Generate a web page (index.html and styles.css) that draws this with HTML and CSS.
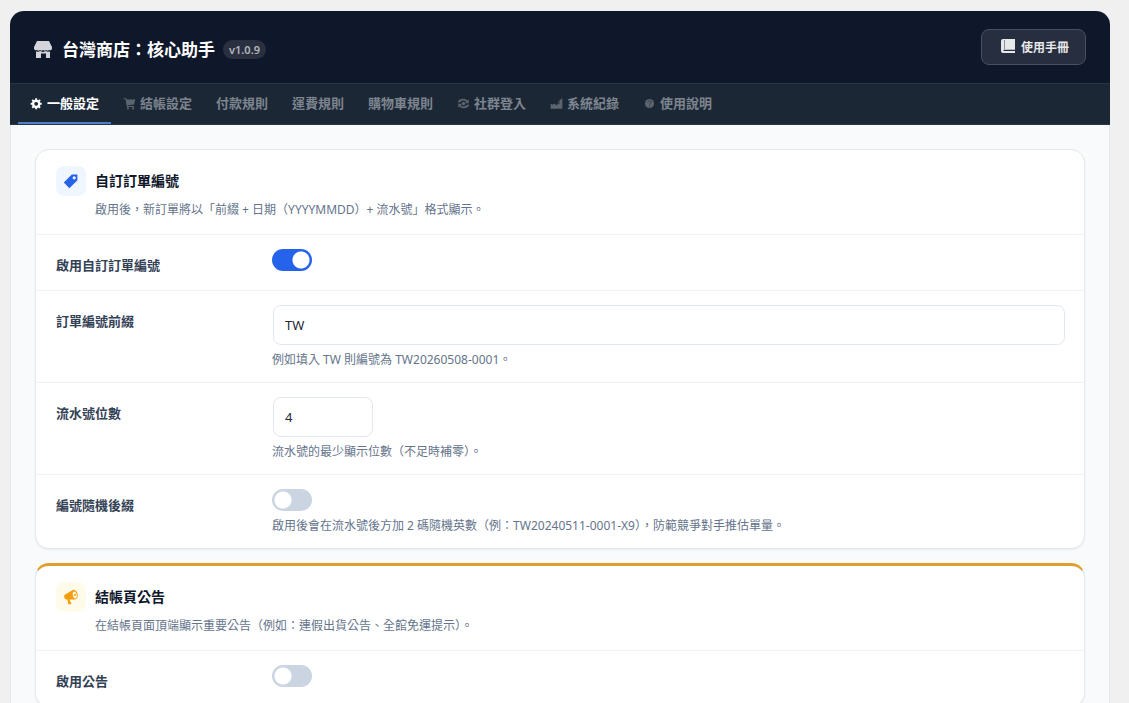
FILE: index.html
```
<!DOCTYPE html>
<html lang="zh-Hant">
<head>
	<meta charset="utf-8">
	<meta name="viewport" content="width=device-width, initial-scale=1">
	<title>台灣商店：核心助手</title>
	<link rel="stylesheet" href="styles.css">
</head>
<body>
	<div class="app">
		<header class="app-header">
			<div class="brand">
				<svg class="brand-icon" viewBox="0 0 20 20"><path d="M4 1h12l3 6v1.700a2 2 0 0 1-3 1.300 2.200 2.200 0 0 1-3 0 2.200 2.200 0 0 1-3 0 2.200 2.200 0 0 1-3 0 2.200 2.200 0 0 1-3 0 2 2 0 0 1-3-1.300V7z"/><path d="M3 11.500l2.500.2 1.500-.6 3 .8 3-.8 1.500.6 2.500-.2V18h-4v-4.500H8V18H3z"/></svg>
				<h1 class="brand-title">台灣商店：核心助手</h1>
				<span class="version">v1.0.9</span>
			</div>
			<button type="button" class="manual-btn">
				<svg class="manual-icon" viewBox="0 0 16 16"><path d="M3 1h12v10.800H3.500v1.200H15v2H3a2 2 0 0 1-2-2V3a2 2 0 0 1 2-2z"/><path class="spine" d="M4.500 2v9"/></svg>
				使用手冊
			</button>
		</header>

		<nav class="tabs">
			<a href="#general" class="tab active">
				<svg class="tab-icon" viewBox="0 0 20 20"><path fill-rule="evenodd" d="M18 12h-2.180c-.17.700-.440 1.350-.810 1.930l1.540 1.540-2.100 2.100-1.540-1.540c-.580.360-1.230.630-1.910.790V19H8v-2.180c-.680-.160-1.330-.430-1.910-.790l-1.540 1.540-2.120-2.120 1.540-1.540c-.360-.580-.630-1.230-.790-1.910H1V9.030h2.170c.160-.700.440-1.350.800-1.940L2.430 5.550l2.100-2.100 1.540 1.540c.580-.370 1.240-.640 1.930-.810V2h3v2.180c.680.160 1.330.430 1.910.790l1.540-1.540 2.120 2.120-1.540 1.540c.360.590.640 1.240.800 1.940H18V12zm-8.500 1.500a3 3 0 1 0 0-6 3 3 0 0 0 0 6z"/></svg>
				一般設定
			</a>
			<a href="#checkout" class="tab">
				<svg class="tab-icon" viewBox="0 0 20 20"><path d="M1 2h4l.8 2H19l-2 7.500-9.800 1 .3 1.500H17v1.500H6L3.800 3.500H1z"/><circle cx="7.500" cy="17.500" r="1.600"/><circle cx="15.500" cy="17.500" r="1.600"/></svg>
				結帳設定
			</a>
			<a href="#payment" class="tab">付款規則</a>
			<a href="#shipping" class="tab">運費規則</a>
			<a href="#cart" class="tab">購物車規則</a>
			<a href="#social" class="tab">
				<svg class="tab-icon" viewBox="0 0 20 20"><circle cx="10" cy="10" r="2.600"/><path d="M1 8c2-6 11-7 15-2.500L18 4v5.500h-5.500l1.800-2C11 4.500 7 5 5 8zM19 12c-2 6-11 7-15 2.500L2 16v-5.500h5.500l-1.800 2C9 15.500 13 15 15 12z"/></svg>
				社群登入
			</a>
			<a href="#logs" class="tab">
				<svg class="tab-icon" viewBox="0 0 20 20"><path d="M1 18v-8l3 2 3-2 3 3 3-3V6l6-4v16z"/><path class="cut" d="M14 4v7"/></svg>
				系統紀錄
			</a>
			<a href="#help" class="tab">
				<svg class="tab-icon" viewBox="0 0 20 20"><circle cx="10" cy="10" r="7"/><path class="cut" d="M7.500 8c0-3.500 5.500-3 5 0-.3 1.500-2.500 1.500-2.500 3.500M10 13v2"/></svg>
				使用說明
			</a>
		</nav>

		<main class="content">
			<section class="card">
				<div class="card-header">
					<span class="card-icon blue">
						<svg viewBox="0 0 20 20"><path fill-rule="evenodd" d="M11 2h7v7L8 19l-7-7zm3 6a2 2 0 1 0 0-4 2 2 0 0 0 0 4z"/></svg>
					</span>
					<h2 class="card-title">自訂訂單編號</h2>
					<p class="card-desc">啟用後，新訂單將以「前綴 + 日期（YYYYMMDD）+ 流水號」格式顯示。</p>
				</div>
				<div class="row">
					<label class="row-label" for="enable_number">啟用自訂訂單編號</label>
					<div class="field">
						<input type="checkbox" class="toggle" id="enable_number" checked>
					</div>
				</div>
				<div class="row">
					<label class="row-label" for="prefix">訂單編號前綴</label>
					<div class="field">
						<input type="text" class="text-input" id="prefix" value="TW">
						<p class="help">例如填入 TW 則編號為 TW20260508-0001。</p>
					</div>
				</div>
				<div class="row">
					<label class="row-label" for="digits">流水號位數</label>
					<div class="field">
						<input type="number" class="text-input small" id="digits" value="4">
						<p class="help">流水號的最少顯示位數（不足時補零）。</p>
					</div>
				</div>
				<div class="row">
					<label class="row-label" for="suffix">編號隨機後綴</label>
					<div class="field">
						<input type="checkbox" class="toggle" id="suffix">
						<p class="help">啟用後會在流水號後方加 2 碼隨機英數（例：TW20240511-0001-X9），防範競爭對手推估單量。</p>
					</div>
				</div>
			</section>

			<section class="card notice">
				<div class="card-header">
					<span class="card-icon amber">
						<svg viewBox="0 0 20 20"><path fill-rule="evenodd" d="M18.150 5.940c.460 1.620.380 3.220-.020 4.480-.420 1.280-1.260 2.180-2.300 2.480-.160.060-.260.060-.400.060-.060.020-.120.020-.180.020-.060.020-.140.020-.220.020h-6.800l2.220 5.500c.020.140-.060.260-.140.340-.080.100-.240.160-.340.160H6.950c-.100 0-.260-.060-.340-.160-.080-.080-.160-.200-.140-.340l-1-5.500H4.250l-.020-.020c-.500.060-1.080-.180-1.540-.620s-.880-1.080-1.060-1.880c-.240-.800-.200-1.560-.020-2.200.180-.620.580-1.080 1.060-1.300l.020-.020 9-5.400c.100-.060.180-.100.240-.160.060-.040.140-.080.240-.120.160-.080.280-.120.500-.180 1.040-.300 2.240.100 3.220.980s1.840 2.240 2.260 3.860zm-2.580 5.980c.640-.180 1.140-.680 1.460-1.500.300-.820.360-2.400.040-3.760-.280-1.080-.780-1.980-1.400-2.620s-1.300-.960-1.940-.800c-.640.180-1.140.780-1.440 1.680-.300.920-.300 2.060 0 3.300.320 1.180.820 2.180 1.440 2.840.620.660 1.220 1.020 1.840.860zm-.4-3.100c-.7.100-1.300-.5-1.300-1.300s.3-1.600 1-1.600 1.300.500 1.300 1.300-.4 1.500-1 1.600z"/></svg>
					</span>
					<h2 class="card-title">結帳頁公告</h2>
					<p class="card-desc">在結帳頁面頂端顯示重要公告（例如：連假出貨公告、全館免運提示）。</p>
				</div>
				<div class="row">
					<label class="row-label" for="enable_notice">啟用公告</label>
					<div class="field">
						<input type="checkbox" class="toggle" id="enable_notice">
					</div>
				</div>
			</section>
		</main>
	</div>
</body>
</html>
```
FILE: styles.css
```
* {
	box-sizing: border-box;
}
html {
	overflow: hidden;
}
body {
	margin: 0;
	padding: 11px 19px 0 10px;
	background: #f0f0f1;
	color: #0f172a;
	font-family: "Noto Sans", "Noto Sans CJK TC", sans-serif;
	font-size: 13px;
	line-height: 20px;
}
h1, h2, p {
	margin: 0;
}
svg {
	flex-shrink: 0;
	fill: currentColor;
}

/* header */
.app-header {
	display: flex;
	align-items: center;
	justify-content: space-between;
	padding: 18px 24px 18px 23px;
	border-radius: 14px 14px 0 0;
	background: #0f172a;
	color: #fff;
}
.brand {
	display: flex;
	align-items: center;
	padding-top: 5px;
}
.brand-icon {
	width: 20px;
	height: 20px;
	margin-right: 9px;
	color: #d3d5da;
}
.brand-title {
	font-size: 17px;
	line-height: 24px;
}
.version {
	margin-left: 8px;
	padding: 0 6px;
	border-radius: 10px;
	background: #2a3040;
	color: #b3b6bd;
	font-size: 11px;
	font-weight: 600;
	line-height: 19px;
}
.manual-btn {
	display: flex;
	align-items: center;
	gap: 5px;
	height: 36px;
	padding: 0 16px 0 18px;
	border: 1px solid #4a5060;
	border-radius: 8px;
	background: #272e3f;
	color: #e7e8ea;
	font-family: inherit;
	font-size: 12px;
	font-weight: 700;
	cursor: pointer;
}
.manual-icon {
	width: 16px;
	height: 16px;
	margin-bottom: 3px;
}
.spine {
	stroke: #8b909b;
}

/* tabs */
.tabs {
	display: flex;
	padding: 0 8px;
	border-top: 1px solid #2a3443;
	border-bottom: 1px solid #2a3443;
	background: #1c2736;
}
.tab {
	display: flex;
	align-items: center;
	gap: 4px;
	height: 40px;
	padding: 0 12px;
	border-bottom: 2px solid transparent;
	color: #7c848e;
	font-weight: 600;
	text-decoration: none;
	white-space: nowrap;
}
.tab-icon {
	width: 13px;
	height: 13px;
	color: #5c646e;
}
.tab.active {
	border-color: #4f7ecb;
	color: #fff;
}
.active .tab-icon {
	color: #fff;
}
.cut {
	fill: none;
	stroke: #1c2736;
	stroke-width: 1;
}

/* content */
.content {
	display: flex;
	flex-direction: column;
	gap: 14px;
	padding: 24px;
	border: solid #e2e8f0;
	border-width: 0 1px 1px;
	background: #f8fafc;
}
.card {
	border: 1px solid #e2e8f0;
	border-radius: 14px;
	background: #fff;
	box-shadow: 0 1px 2px rgba(15, 23, 42, 0.06);
}
.notice {
	border-top: 3px solid #e09f2d;
}
.card-header {
	display: grid;
	grid-template-columns: 30px 1fr;
	column-gap: 9px;
	row-gap: 6px;
	align-items: center;
	padding: 16px 20px;
}
.card-icon {
	display: flex;
	align-items: center;
	justify-content: center;
	height: 30px;
	border-radius: 8px;
}
.card-icon svg {
	width: 16px;
	height: 16px;
}
.blue {
	background: #eff6ff;
	color: #2563eb;
}
.amber {
	background: #fffbeb;
	color: #f59e0b;
}
.card-title {
	font-size: 14px;
	line-height: 20px;
}
.card-desc {
	grid-column: 2;
	color: #64748b;
	font-size: 12px;
	line-height: 16px;
}
.row {
	display: grid;
	grid-template-columns: 200px 1fr;
	gap: 16px;
	padding: 14px 20px;
	border-top: 1px solid #eef2f6;
}
.row-label {
	padding: 6px 0 1px;
	color: #334155;
	font-weight: 600;
}
.toggle {
	appearance: none;
	display: block;
	width: 40px;
	height: 22px;
	margin: 0;
	border-radius: 11px;
	background: radial-gradient(circle at 11px 11px, #fff 8px, #cbd5e1 9px);
	cursor: pointer;
}
.toggle:checked {
	background: radial-gradient(circle at 29px 11px, #fff 8px, #2563eb 9px);
}
.text-input {
	display: block;
	width: 100%;
	height: 40px;
	margin: 0 0 0 1px;
	padding: 0 11px;
	border: 1px solid #e2e8f0;
	border-radius: 8px;
	background: #fff;
	color: #1e293b;
	font-family: inherit;
	font-size: 13px;
}
.small {
	width: 100px;
}
.help {
	margin-top: 7px;
	color: #64748b;
	font-size: 12px;
	line-height: 16px;
}
```
